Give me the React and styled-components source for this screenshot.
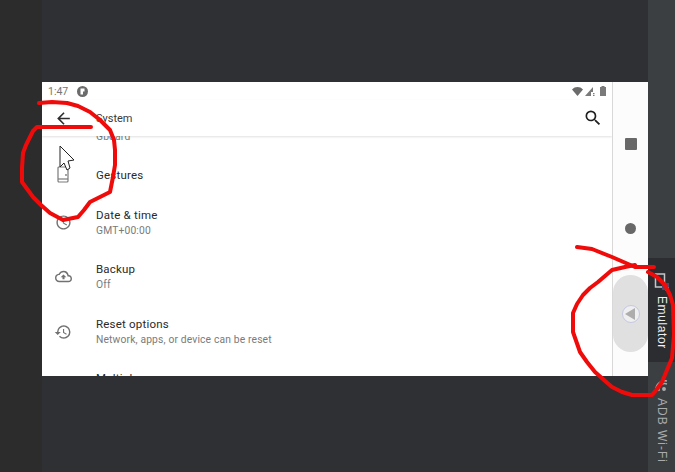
import React from 'react';
import styled, { createGlobalStyle } from 'styled-components';
import { MdArrowBack, MdSearch, MdAccessTime, MdRestore, MdOutlineBackup } from 'react-icons/md';

const Global = createGlobalStyle`
    html, body {
        margin: 0;
        padding: 0;
        background: #2e3033;
        overflow: hidden;
    }
`;

const Window = styled.div`
    position: relative;
    width: 675px;
    height: 472px;
    display: flex;
    overflow: hidden;
    font-family: Roboto, "Liberation Sans", sans-serif;
    background: #2e3033;
`;

const Gutter = styled.div`
    width: 42px;
    background: #2c2c2c;
`;

const Center = styled.div`
    width: 606px;
    display: flex;
    flex-direction: column;
    padding-top: 82px;
    box-sizing: border-box;
`;

const Device = styled.div`
    height: 294px;
    display: flex;
    background: #fff;
`;

const Screen = styled.div`
    width: 570px;
    display: flex;
    flex-direction: column;
    overflow: hidden;
`;

const StatusBar = styled.div`
    height: 18px;
    display: flex;
    align-items: center;
    justify-content: space-between;
    padding: 0 6px 0 6px;
    font-size: 10.5px;
    color: #757575;
`;

const StatusGroup = styled.div`
    display: flex;
    align-items: center;
    gap: ${p => p.gap}px;
`;

const Toolbar = styled.div`
    height: 36px;
    display: flex;
    align-items: center;
    padding: 0 9px 0 12px;
    background: #fff;
    position: relative;
    z-index: 1;
    box-shadow: 0 1px 2px rgba(0, 0, 0, 0.12);
`;

const ToolbarTitle = styled.div`
    flex: 1;
    margin-left: 23px;
    font-size: 11px;
    color: #3a3a3a;
`;

const List = styled.div`
    flex: 1;
    overflow: hidden;
    display: flex;
    flex-direction: column;
`;

const Row = styled.div`
    flex: none;
    height: ${p => p.h}px;
    box-sizing: border-box;
    display: flex;
    align-items: center;
`;

const ClippedTopRow = styled(Row)`
    align-items: flex-end;
    padding: 0 0 12px 54px;
`;

const ClippedBottomRow = styled(Row)`
    align-items: flex-start;
    padding: 12px 0 0 54px;
`;

const IconSlot = styled.div`
    width: 42px;
    padding-right: 12px;
    display: flex;
    justify-content: center;
    color: #717171;
`;

const RowText = styled.div`
    display: flex;
    flex-direction: column;
    gap: 2px;
`;

const Title = styled.div`
    font-size: 11.5px;
    line-height: 14px;
    color: #2a2a2a;
    letter-spacing: 0.2px;
    white-space: nowrap;
`;

const Sub = styled.div`
    font-size: 10.3px;
    line-height: 13px;
    color: #7a7a7a;
    letter-spacing: 0.15px;
    white-space: nowrap;
`;

const NavRail = styled.div`
    width: 36px;
    border-left: 1px solid #d8d8d8;
    box-sizing: border-box;
    background: #fcfcfc;
    display: flex;
    flex-direction: column;
    align-items: center;
`;

const NavSquare = styled.div`
    width: 12px;
    height: 12px;
    margin-top: 56px;
    border-radius: 1px;
    background: #686868;
`;

const NavDot = styled.div`
    width: 11px;
    height: 11px;
    margin-top: 73px;
    border-radius: 50%;
    background: #686868;
`;

const NavBackPill = styled.div`
    width: 35px;
    height: 77px;
    margin-top: 41px;
    border-radius: 18px;
    background: #e0e0e0;
    display: flex;
    align-items: center;
    justify-content: center;
`;

const BackCircle = styled.div`
    width: 16px;
    height: 16px;
    border-radius: 50%;
    border: 1px solid #c5c8e2;
    background: #efefef;
    display: flex;
    align-items: center;
    justify-content: center;
`;

const BackTriangle = styled.div`
    width: 0;
    height: 0;
    margin-left: -2px;
    border-top: 6px solid transparent;
    border-bottom: 6px solid transparent;
    border-right: 10px solid #adadad;
`;

const SideBar = styled.div`
    width: 27px;
    background: #3c3f41;
    display: flex;
    flex-direction: column;
    padding-top: 258px;
    box-sizing: border-box;
`;

const SideTab = styled.div`
    height: ${p => p.h}px;
    flex: none;
    background: ${p => (p.active ? '#2b2d30' : 'transparent')};
    color: ${p => (p.active ? '#f0f0f0' : '#a9abad')};
    display: flex;
    flex-direction: column;
    align-items: center;
    box-sizing: border-box;
    padding-top: ${p => p.top}px;
    gap: ${p => p.gap}px;
`;

const SideLabel = styled.span`
    writing-mode: vertical-rl;
    font-family: "Liberation Sans", sans-serif;
    font-size: 12px;
    line-height: 14px;
    letter-spacing: ${p => p.spacing}px;
    white-space: nowrap;
`;

const Overlay = styled.svg`
    position: absolute;
    left: 0;
    top: 0;
    z-index: 5;
    pointer-events: none;
`;

const rows = [
    { h: 40, title: 'Gestures', icon: 'phone' },
    { h: 54, title: 'Date & time', sub: 'GMT+00:00', icon: 'clock' },
    { h: 55, title: 'Backup', sub: 'Off', icon: 'backup' },
    { h: 55, title: 'Reset options', sub: 'Network, apps, or device can be reset', icon: 'reset' },
];

function RowIcon({ kind }) {
    if (kind === 'phone') {
        return (
            <svg width="12" height="18" viewBox="0 0 12 18" fill="none" stroke="#7a7a7a" strokeWidth="1.2">
                <rect x="1" y="1" width="10" height="15" rx="1" />
                <path d="M1 13h10" />
                <circle cx="9" cy="9" r="0.9" fill="#7a7a7a" stroke="none" />
            </svg>
        );
    }
    if (kind === 'clock') return <MdAccessTime size={17} />;
    if (kind === 'backup') return <MdOutlineBackup size={17} />;
    if (kind === 'reset') return <MdRestore size={18} />;
    return null;
}

const annotationLeft = '39,103 52,102 67,103 78,106 90,112 100,120 110,130 114,140 115,150 115,165 113,177 110,192 100,197 90,202 84,210 78,217 63,220 50,213 41,205 33,197 22,182 22,168 23,153 26,145 30,137 33,131 37,127 91,127';
const annotationRight = '577,247 592,249 612,257 635,267 654,267';
const annotationCircle = '635,265 625,267 612,270 605,276 598,282 590,288 583,295 577,304 573,313 573,332 580,352 587,362 595,372 604,380 612,387 622,392 632,395 652,395 657,389 662,382 667,370 672,358 674,335 673,305 670,295 665,285 657,277 648,272';

export default function App() {
    return (
        <Window>
            <Global />
            <Gutter />
            <Center>
                <Device>
                    <Screen>
                        <StatusBar>
                            <StatusGroup gap={9}>
                                <span>1:47</span>
                                <svg width="11" height="11" viewBox="0 0 11 11">
                                    <circle cx="5.5" cy="5.5" r="5.5" fill="#6b6b6b" />
                                    <path d="M3.500 2.500h4v3H6V8.500H3.500z" fill="#fff" />
                                </svg>
                            </StatusGroup>
                            <StatusGroup gap={2}>
                                <svg width="11" height="9" viewBox="0 0 11 9">
                                    <path d="M0 2.500C3-.8 8-.8 11 2.500L5.500 9z" fill="#6b6b6b" />
                                </svg>
                                <svg width="10" height="9" viewBox="0 0 10 9" style={{ marginRight: 3 }}>
                                    <path d="M0 9 8 0v5H6v4z" fill="#7a7a7a" />
                                    <path d="M8 6h1.500v1.200H8zM8 8h1.500v1H8z" fill="#7a7a7a" />
                                </svg>
                                <svg width="6" height="10" viewBox="0 0 6 10">
                                    <path d="M1.500 0h3v1H6v9H0V1h1.500z" fill="#7a7a7a" />
                                </svg>
                            </StatusGroup>
                        </StatusBar>
                        <Toolbar>
                            <MdArrowBack size={19} color="#2d2d2d" />
                            <ToolbarTitle>System</ToolbarTitle>
                            <MdSearch size={20} color="#1f1f1f" />
                        </Toolbar>
                        <List>
                            <ClippedTopRow h={19}>
                                <Sub>Gboard</Sub>
                            </ClippedTopRow>
                            {rows.map(r => (
                                <Row key={r.title} h={r.h}>
                                    <IconSlot><RowIcon kind={r.icon} /></IconSlot>
                                    <RowText>
                                        <Title>{r.title}</Title>
                                        {r.sub && <Sub>{r.sub}</Sub>}
                                    </RowText>
                                </Row>
                            ))}
                            <ClippedBottomRow h={17}>
                                <Title>Multiple users</Title>
                            </ClippedBottomRow>
                        </List>
                    </Screen>
                    <NavRail>
                        <NavSquare />
                        <NavDot />
                        <NavBackPill>
                            <BackCircle>
                                <BackTriangle />
                            </BackCircle>
                        </NavBackPill>
                    </NavRail>
                </Device>
            </Center>
            <SideBar>
                <SideTab active h={104} top={15} gap={5}>
                    <svg width="16" height="18" viewBox="0 0 16 18" fill="none">
                        <path d="M10 14H1.500V1h9v9" stroke="#c4c6c8" strokeWidth="1.500" />
                        <rect x="8" y="10" width="7" height="7" fill="#4b4a72" />
                        <rect x="11" y="14" width="4" height="3.500" fill="#2fe04a" />
                    </svg>
                    <SideLabel spacing={0.6}>Emulator</SideLabel>
                </SideTab>
                <SideTab h={110} top={18} gap={6}>
                    <svg width="17" height="12" viewBox="0 0 17 12" fill="none" stroke="#a9abad" strokeWidth="1.500">
                        <path d="M3 11 A9 9 0 0 1 14 1" />
                        <path d="M6 11 A6 6 0 0 1 14 4" />
                        <circle cx="11" cy="9" r="1.200" fill="#a9abad" />
                    </svg>
                    <SideLabel spacing={1}>ADB Wi-Fi</SideLabel>
                </SideTab>
            </SideBar>
            <Overlay width="675" height="472" viewBox="0 0 675 472" fill="none">
                <g stroke="#f00b0b" strokeWidth="4" strokeLinecap="round" strokeLinejoin="round">
                    <polyline points={annotationLeft} />
                    <polyline points={annotationRight} />
                    <polyline points={annotationCircle} />
                </g>
                <path d="M60 146 V167 L64 163 L67 170 L70 168 L68 161 L74 160 Z" fill="#fff" stroke="#222" strokeWidth="1" />
            </Overlay>
        </Window>
    );
}
